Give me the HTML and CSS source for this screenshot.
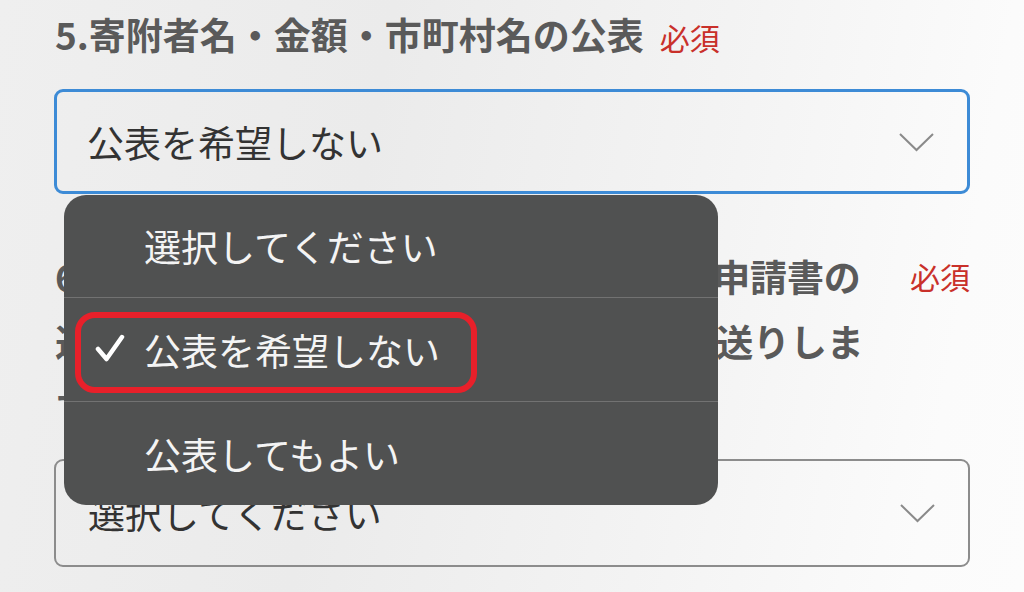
FILE: index.html
```html
<!DOCTYPE html>
<html lang="ja">
<head>
    <meta charset="UTF-8">
    <meta name="viewport" content="width=device-width, initial-scale=1.0">
    <title>寄附申込フォーム</title>
    <link rel="stylesheet" href="styles.css">
</head>
<body>
    <div class="form">
        <div class="field">
            <div class="field-label">
                <span class="label-text">5.寄附者名・金額・市町村名の公表</span><span class="required">必須</span>
            </div>
            <div class="select focused">
                <span class="select-value">公表を希望しない</span>
                <svg class="chevron" width="36" height="20" viewBox="0 0 36 20"><polyline points="1,2 17.5,18 34,2" fill="none" stroke="#8a8a8a" stroke-width="2"/></svg>
            </div>
        </div>

        <div class="field">
            <div class="field-label wrap">
                <span class="label-text">6.寄附金受領証明書・ワンストップ特例申請書の送付先は、原則として住民票の住所へお送りします。</span>
                <span class="required">必須</span>
            </div>
            <div class="select">
                <span class="select-value">選択してください</span>
                <svg class="chevron" width="36" height="20" viewBox="0 0 36 20"><polyline points="1,2 17.5,18 34,2" fill="none" stroke="#8a8a8a" stroke-width="2"/></svg>
            </div>
        </div>
    </div>

    <!-- native picker opened over the form -->
    <div class="picker">
        <div class="picker-item">選択してください</div>
        <div class="picker-item checked">
            <svg class="check" width="30" height="30" viewBox="0 0 30 30"><polyline points="3,15 11.5,25 27,3" fill="none" stroke="#fff" stroke-width="4.5" stroke-linecap="round" stroke-linejoin="round"/></svg>
            公表を希望しない
        </div>
        <div class="picker-item">公表してもよい</div>
    </div>

    <div class="highlight"></div>
</body>
</html>
```

FILE: styles.css
```css
body {
    margin: 0;
    height: 592px;
    overflow: hidden;
    font-family: "Noto Sans CJK JP", "Noto Sans", sans-serif;
    background: linear-gradient(100deg, #efefef 0%, #ebebeb 35%, #f3f3f3 65%, #fbfbfb 90%, #fcfcfc 100%);
}

.form {
    padding: 9px 54px 0 54px;
}

.field-label {
    font-weight: bold;
    font-size: 37px;
    line-height: 50px;
    height: 50px;
    color: #5a5a5a;
    padding-left: 1px;
    white-space: nowrap;
}

.field-label .required {
    margin-left: 16px;
}

.field-label.wrap {
    display: flex;
    align-items: flex-start;
    justify-content: space-between;
    height: auto;
    margin-top: 50px;
    line-height: 65px;
    white-space: normal;
}

.field-label.wrap .label-text {
    width: 830px;
    letter-spacing: -0.2px;
}

.required {
    font-weight: normal;
    font-size: 30px;
    color: #c9302a;
}

.select {
    display: flex;
    align-items: center;
    justify-content: space-between;
    box-sizing: border-box;
    height: 108px;
    margin-top: 20px;
    padding: 0 32px 0 32px;
    border: 2px solid #8c8c8c;
    border-radius: 9px;
    font-size: 36px;
    color: #333;
}

.select.focused {
    height: 105px;
    margin-top: 30px;
    border: 3px solid #3d8bd6;
    padding-left: 30px;
}

.select-value {
    font-size: 37px;
}

.chevron {
    display: block;
}

.picker {
    position: absolute;
    left: 64px;
    top: 195px;
    width: 654px;
    height: 310px;
    background-color: #505151;
    border-radius: 22px;
    overflow: hidden;
}

.picker-item {
    position: relative;
    display: flex;
    align-items: center;
    height: 103px;
    padding-left: 80px;
    font-size: 37px;
    color: #f4f4f4;
    border-top: 1px solid #727272;
}

.picker-item:first-child {
    border-top: none;
    height: 102px;
}

.check {
    position: absolute;
    left: 31px;
    top: 36px;
}

.highlight {
    position: absolute;
    left: 75px;
    top: 312px;
    width: 390px;
    height: 69px;
    border: 6px solid #e8202a;
    border-radius: 20px;
}
```
